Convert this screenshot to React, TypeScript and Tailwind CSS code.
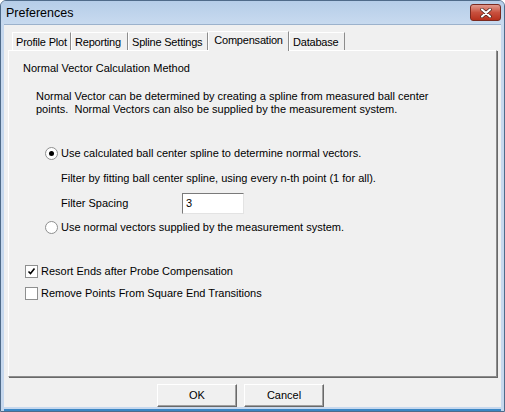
const font = { fontFamily: '"Liberation Sans", Arial, sans-serif' };

function Tab({ label, active, w }: { label: string; active?: boolean; w: string }) {
  if (active) {
    return (
      <div
        className={`${w} h-[20px] -mb-px relative z-10 bg-[#f0f0f0] border border-b-0 border-t-white border-l-white border-r-[#8c8c8c] flex items-start justify-center pt-[2px] text-[11px] leading-[13px] whitespace-nowrap tracking-[-0.2px]`}
      >
        {label}
      </div>
    );
  }
  return (
    <div
      className={`${w} h-[18px] mt-[2px] bg-[#f0f0f0] border border-b-0 border-t-white border-l-white border-r-[#8c8c8c] flex items-start pl-[3px] pt-[3px] text-[11px] leading-[13px] whitespace-nowrap tracking-[-0.2px]`}
    >
      {label}
    </div>
  );
}

function Radio({ checked }: { checked?: boolean }) {
  return (
    <span className="w-[13px] h-[13px] rounded-full border border-[#8e8f8f] bg-white flex items-center justify-center shrink-0">
      {checked && <span className="w-[5px] h-[5px] rounded-full bg-black" />}
    </span>
  );
}

function Check({ checked }: { checked?: boolean }) {
  return (
    <span className="w-[13px] h-[13px] border border-[#8e8f8f] bg-white flex items-center justify-center shrink-0">
      {checked && (
        <svg width="9" height="9" viewBox="0 0 9 9">
          <path d="M1.5 4.5 L3.5 6.5 L7.5 1.5" stroke="#000" strokeWidth="1.6" fill="none" />
        </svg>
      )}
    </span>
  );
}

function Button({ label }: { label: string }) {
  return (
    <div className="w-[80px] h-[23px] border border-t-white border-l-white border-r-[#696969] border-b-[#696969] bg-[#f0f0f0] shadow-[inset_-1px_-1px_0_#a0a0a0] flex items-center justify-center text-[11px]">
      {label}
    </div>
  );
}

export default function App() {
  return (
    <div
      className="w-[505px] h-[412px] bg-[#c6d8ee] border border-[#4f6b8a] rounded-t-[6px] flex flex-col text-black overflow-hidden"
      style={font}
    >
      {/* Title bar */}
      <div className="h-[23px] bg-gradient-to-b from-[#b5cde8] to-[#c8daef] flex items-start justify-between pl-[5px] pr-[3px]">
        <span className="text-[12.5px] leading-[15px] mt-[5px] text-black">Preferences</span>
        <div className="w-[31px] h-[17px] mt-[3px] rounded-[3px] border border-[#7a2a20] bg-gradient-to-b from-[#e09a8e] via-[#c8503e] to-[#b7301c] flex items-center justify-center">
          <svg width="12" height="10" viewBox="0 0 12 10">
            <path d="M2 1.5 L10 8.5 M10 1.5 L2 8.5" stroke="#3b1a14" strokeWidth="3.4" strokeLinecap="round" />
            <path d="M2 1.5 L10 8.5 M10 1.5 L2 8.5" stroke="#fff" strokeWidth="2.2" strokeLinecap="round" />
          </svg>
        </div>
      </div>

      {/* Client area */}
      <div className="flex-1 mx-[3px] mb-[2px] bg-[#f0f0f0] border-t border-[#9cb2cc] flex flex-col px-[4px] pt-[5px]">
        <div className="flex items-end pl-[4px] h-[20px]">
          <Tab label="Profile Plot" w="w-[59px]" />
          <Tab label="Reporting" w="w-[57px]" />
          <Tab label="Spline Settings" w="w-[80px]" />
          <Tab label="Compensation" active w="w-[81px]" />
          <Tab label="Database" w="w-[56px]" />
        </div>

        <div className="h-[327px] border border-t-white border-l-white border-r-[#8c8c8c] border-b-[#8c8c8c] shadow-[1px_1px_0_#696969] text-[11px] leading-[13px]">
          <div className="pl-[14px] pt-[11px]">Normal Vector Calculation Method</div>
          <div className="pl-[27px] mt-[15px] whitespace-pre">
            Normal Vector can be determined by creating a spline from measured ball center{"\n"}points.  Normal Vectors can also be supplied by the measurement system.
          </div>

          <div className="pl-[36px] mt-[31px] flex items-center gap-[3px] h-[13px]">
            <Radio checked />
            <span>Use calculated ball center spline to determine normal vectors.</span>
          </div>
          <div className="pl-[52px] mt-[12px]">
            Filter by fitting ball center spline, using every n-th point (1 for all).
          </div>
          <div className="pl-[52px] mt-[8px] flex items-center h-[21px]">
            <span className="w-[121px]">Filter Spacing</span>
            <div className="w-[62px] h-[21px] bg-white border border-t-[#7a7a7a] border-l-[#7a7a7a] border-r-[#e3e3e3] border-b-[#e3e3e3] pl-[3px] flex items-center">
              3
            </div>
          </div>
          <div className="pl-[36px] mt-[7px] flex items-center gap-[3px] h-[13px]">
            <Radio />
            <span>Use normal vectors supplied by the measurement system.</span>
          </div>

          <div className="pl-[16px] mt-[31px] flex items-center gap-[3px] h-[13px]">
            <Check checked />
            <span>Resort Ends after Probe Compensation</span>
          </div>
          <div className="pl-[16px] mt-[9px] flex items-center gap-[3px] h-[13px]">
            <Check />
            <span>Remove Points From Square End Transitions</span>
          </div>
        </div>

        <div className="flex gap-[7px] pl-[149px] mt-[7px]">
          <Button label="OK" />
          <Button label="Cancel" />
        </div>
      </div>
      <div className="h-[2px] mx-[3px] bg-[#3b86c4]" />
    </div>
  );
}
